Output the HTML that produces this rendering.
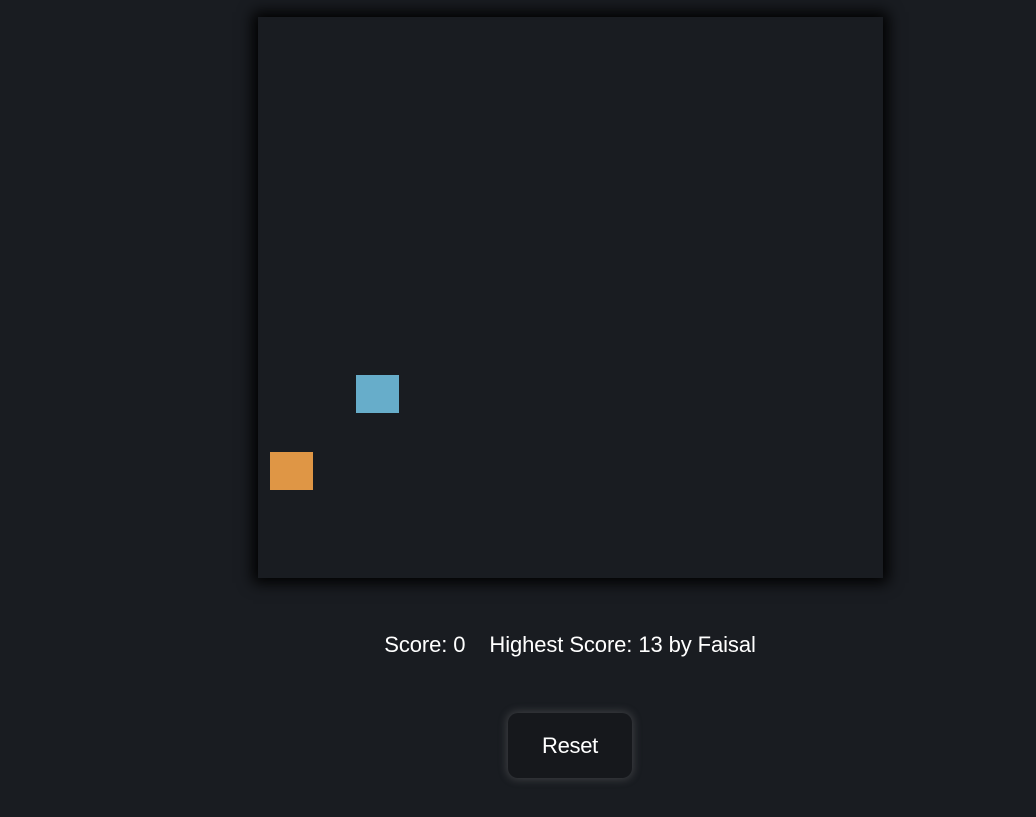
<!DOCTYPE html>
<html><head><style>
html,body{margin:0;padding:0;width:1036px;height:817px;background:#191c21;overflow:hidden;font-family:"Liberation Sans",sans-serif;color:#fff}
#board{position:absolute;left:258px;top:17px;width:625px;height:561px;background:#191c21;box-shadow:0 0 14px 5px #000}
.sq{position:absolute;width:43px;height:38px}
#score{position:absolute;top:632px;left:0;width:1140px;text-align:center;font-size:22px;letter-spacing:-0.1px;white-space:pre}
#btn{position:absolute;left:508px;top:713px;width:124px;height:65px;background:#16181c;border-radius:10px;box-shadow:0 0 8px 2px rgba(120,120,120,0.35);font-size:22px;display:flex;align-items:center;justify-content:center;letter-spacing:-0.3px}
</style></head><body>
<div id="board">
<div class="sq" style="left:98px;top:358px;background:#67adca"></div>
<div class="sq" style="left:12px;top:435px;background:#df9645"></div>
</div>
<div id="score">Score: 0    Highest Score: 13 by Faisal</div>
<div id="btn">Reset</div>
</body></html>
